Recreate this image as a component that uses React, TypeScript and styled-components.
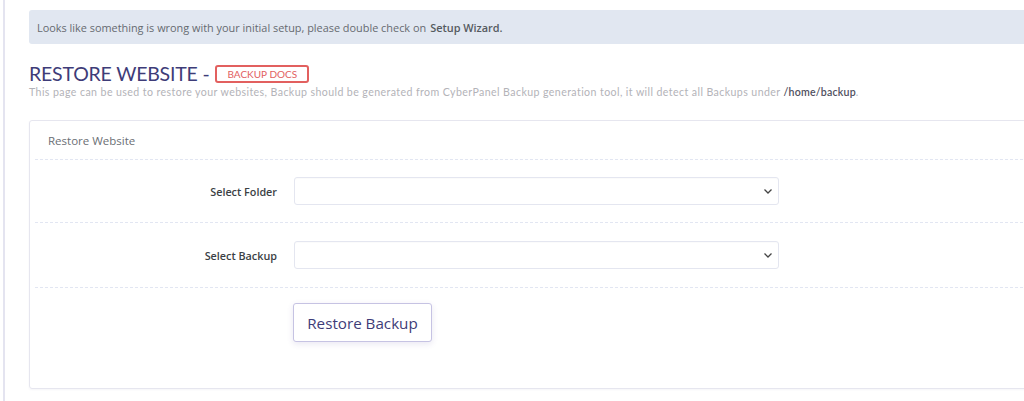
import React from 'react'
import styled, { createGlobalStyle } from 'styled-components'

const GlobalStyle = createGlobalStyle`
  html, body {
    margin: 0;
    padding: 0;
    background: #fff;
    font-family: 'Open Sans', 'Liberation Sans', sans-serif;
    overflow: hidden;
  }
`

const Page = styled.div`
  display: flex;
  width: 1024px;
  height: 401px;
  overflow: hidden;
`

const SideEdge = styled.div`
  flex-shrink: 0;
  width: 3px;
  border-right: 2px solid #e4e4f0;
`

const Content = styled.div`
  flex: 1;
  min-width: 0;
  padding: 10px 0 0 24px;
  margin-right: -40px;
`

const Alert = styled.div`
  background: #e1e7f1;
  border-radius: 3px 0 0 3px;
  height: 34px;
  padding: 0 8px;
  display: flex;
  align-items: center;
  font-size: 10.9px;
  color: #666a70;

  b {
    font-weight: 600;
    color: #555a60;
    margin-left: 4px;
  }
`

const TitleRow = styled.div`
  margin-top: 19px;
  display: flex;
  align-items: center;
  gap: 6px;
`

const Title = styled.h1`
  margin: 0;
  font-family: 'Lato', 'Noto Sans', sans-serif;
  font-weight: 400;
  font-size: 19.5px;
  letter-spacing: -0.2px;
  color: #3e3c78;
  line-height: 22px;
`

const DocsBadge = styled.span`
  border: 2px solid #e2605f;
  border-radius: 3px;
  color: #e2605f;
  font-family: 'Lato', 'Noto Sans', sans-serif;
  font-size: 10px;
  height: 14px;
  padding: 0 10px;
  display: inline-flex;
  align-items: center;
  margin-top: -1px;
`

const Subtitle = styled.p`
  margin: 0;
  font-family: 'Lato', 'Noto Sans', sans-serif;
  font-size: 10.6px;
  color: #b3b3b8;
  line-height: 14px;
  letter-spacing: 0.41px;

  strong {
    font-weight: 600;
    color: #505060;
    letter-spacing: 0.2px;
  }
`

const Card = styled.div`
  margin-top: 21px;
  border: 1px solid #e6e6ef;
  border-radius: 3px;
  height: 267px;
  padding: 0 0 0 5px;
  box-shadow: 0 1px 2px rgba(60, 60, 120, 0.05);
`

const CardHeader = styled.div`
  height: 38px;
  padding-left: 13px;
  display: flex;
  align-items: center;
  font-size: 11.5px;
  color: #6b6f75;
  border-bottom: 1px dashed #e2e6f2;
`

const FormRow = styled.div<{ $h: number; $last?: boolean }>`
  display: grid;
  grid-template-columns: 242px 485px;
  column-gap: 17px;
  align-items: center;
  height: ${(p) => p.$h}px;
  border-bottom: ${(p) => (p.$last ? 'none' : '1px dashed #e2e6f2')};
`

const ButtonRow = styled.div`
  display: grid;
  grid-template-columns: 242px auto;
  column-gap: 16px;
  padding-top: 15px;
`

const Label = styled.label`
  text-align: right;
  font-size: 10.8px;
  font-weight: 600;
  color: #3b3f45;
`

const SelectBox = styled.div`
  height: 26px;
  border: 1px solid #e4e6f0;
  border-radius: 3px;
  background: #fff;
  display: flex;
  align-items: center;
  justify-content: flex-end;
  padding-right: 5px;
  box-shadow: inset 0 1px 1px rgba(0, 0, 0, 0.02);
`

const RestoreButton = styled.button`
  justify-self: start;
  height: 39px;
  width: 139px;
  border: 1px solid #c6c3e3;
  border-radius: 3px;
  background: #fff;
  font-family: 'Open Sans', 'Liberation Sans', sans-serif;
  font-size: 15.2px;
  color: #3e3c78;
  box-shadow: 0 2px 6px rgba(70, 60, 150, 0.12);
  cursor: pointer;
  padding: 0;
`

const Chevron = () => (
  <svg width="10" height="8" viewBox="0 0 10 8">
    <path d="M1.5 2.5 L5 6 L8.5 2.5" fill="none" stroke="#444" strokeWidth="1.3" />
  </svg>
)

export default function App() {
  return (
    <>
      <GlobalStyle />
      <Page>
        <SideEdge />
        <Content>
          <Alert>
            Looks like something is wrong with your initial setup, please double check on
            <b>Setup Wizard.</b>
          </Alert>
          <TitleRow>
            <Title>RESTORE WEBSITE -</Title>
            <DocsBadge>BACKUP DOCS</DocsBadge>
          </TitleRow>
          <Subtitle>
            This page can be used to restore your websites, Backup should be generated from
            CyberPanel Backup generation tool, it will detect all Backups under{' '}
            <strong>/home/backup</strong>.
          </Subtitle>
          <Card>
            <CardHeader>Restore Website</CardHeader>
            <FormRow $h={62}>
              <Label>Select Folder</Label>
              <SelectBox>
                <Chevron />
              </SelectBox>
            </FormRow>
            <FormRow $h={64}>
              <Label>Select Backup</Label>
              <SelectBox>
                <Chevron />
              </SelectBox>
            </FormRow>
            <ButtonRow>
              <span />
              <RestoreButton>Restore Backup</RestoreButton>
            </ButtonRow>
          </Card>
        </Content>
      </Page>
    </>
  )
}
